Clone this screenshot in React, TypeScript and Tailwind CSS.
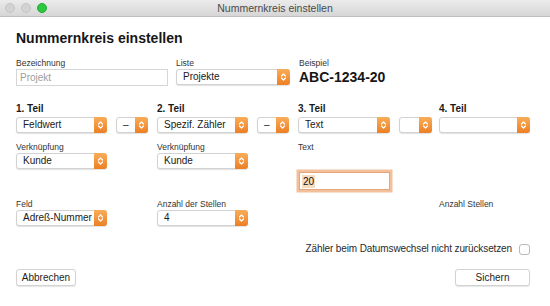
import React from "react";

const Chevron = () => (
	<svg width="7" height="10" viewBox="0 0 7 10" fill="none">
		<path d="M1.5 4 L3.5 2 L5.5 4" stroke="white" strokeWidth="1.2" strokeLinecap="round" strokeLinejoin="round" />
		<path d="M1.5 6 L3.5 8 L5.5 6" stroke="white" strokeWidth="1.2" strokeLinecap="round" strokeLinejoin="round" />
	</svg>
);

const Popup = ({ value, w }: { value?: string; w: string }) => (
	<div
		className={`${w} h-[16px] flex items-stretch bg-white rounded-[3px] border border-[#d2d2d2] shadow-[0_1px_1px_rgba(0,0,0,0.12)]`}
	>
		<span className="flex-1 pl-[6px] text-[10px] leading-[14px] text-[#1a1a1a] whitespace-nowrap overflow-hidden">
			{value}
		</span>
		<span className="w-[13px] -my-px -mr-px rounded-r-[3px] bg-gradient-to-b from-[#f9ad58] to-[#ec7f22] flex items-center justify-center">
			<Chevron />
		</span>
	</div>
);

const Label = ({ children }: { children: React.ReactNode }) => (
	<p className="text-[8.5px] leading-[10px] text-[#333] mb-px whitespace-nowrap">{children}</p>
);

const PartHead = ({ children }: { children: React.ReactNode }) => (
	<p className="text-[10px] leading-[12px] font-bold text-[#1a1a1a] mb-[2px]">{children}</p>
);

const Light = ({ color }: { color: string }) => (
	<span className={`w-[10px] h-[10px] rounded-full ${color}`}></span>
);

export default function App() {
	return (
		<div className="w-[550px] h-[306px] bg-white flex flex-col font-['Liberation_Sans',Arial,sans-serif] overflow-hidden">
			{/* title bar */}
			<div className="h-[17px] shrink-0 relative flex items-center bg-gradient-to-b from-[#ebebeb] to-[#d6d6d6] border-b border-[#bfbfbf]">
				<div className="flex gap-[6px] pl-[5px]">
					<Light color="bg-[#d3d3d3] border border-[#c4c4c4]" />
					<Light color="bg-[#d3d3d3] border border-[#c4c4c4]" />
					<Light color="bg-[#2bc840] border border-[#23a935]" />
				</div>
				<p className="absolute inset-x-0 text-center text-[10.5px] leading-[17px] text-[#4a4a4a]">
					Nummernkreis einstellen
				</p>
			</div>

			<div className="flex-1 flex flex-col pl-[16px] pr-[20px]">
				<h1 className="mt-[13px] text-[14px] leading-[16px] font-bold text-[#161616]">
					Nummernkreis einstellen
				</h1>

				{/* row 1 */}
				<div className="mt-[12px] flex">
					<div className="w-[160px]">
						<Label>Bezeichnung</Label>
						<div className="w-[152px] h-[17px] border border-[#d6d6d6] bg-white pl-[3px] text-[10px] leading-[15px] text-[#9d9d9d]">
							Projekt
						</div>
					</div>
					<div className="w-[123px]">
						<Label>Liste</Label>
						<Popup value="Projekte" w="w-[114px]" />
					</div>
					<div>
						<Label>Beispiel</Label>
						<p className="mt-px text-[14px] leading-[16px] font-bold text-[#161616]">ABC-1234-20</p>
					</div>
				</div>

				{/* row 2 */}
				<div className="mt-[17px] grid grid-cols-[141px_141px_141px_91px]">
					<div>
						<PartHead>1. Teil</PartHead>
						<div className="flex gap-[9px]">
							<Popup value="Feldwert" w="w-[91px]" />
							<Popup value="–" w="w-[32px]" />
						</div>
					</div>
					<div>
						<PartHead>2. Teil</PartHead>
						<div className="flex gap-[9px]">
							<Popup value="Spezif. Zähler" w="w-[91px]" />
							<Popup value="–" w="w-[32px]" />
						</div>
					</div>
					<div>
						<PartHead>3. Teil</PartHead>
						<div className="flex gap-[9px]">
							<Popup value="Text" w="w-[92px]" />
							<Popup w="w-[33px]" />
						</div>
					</div>
					<div>
						<PartHead>4. Teil</PartHead>
						<Popup w="w-[91px]" />
					</div>
				</div>

				{/* row 3 */}
				<div className="mt-[9px] grid grid-cols-[141px_141px_141px_91px]">
					<div>
						<Label>Verknüpfung</Label>
						<Popup value="Kunde" w="w-[91px]" />
					</div>
					<div>
						<Label>Verknüpfung</Label>
						<Popup value="Kunde" w="w-[91px]" />
					</div>
					<div>
						<Label>Text</Label>
						<div className="mt-[20px] ml-px w-[91px] h-[18px] border border-[#e4a77c] bg-white shadow-[0_0_0_2.5px_#f4c09b] flex items-center pl-[2px]">
							<span className="bg-[#f9dbbd] text-[10px] leading-[13px] text-[#111] px-px">20</span>
						</div>
					</div>
				</div>

				{/* row 4 */}
				<div className="mt-[9px] grid grid-cols-[141px_141px_141px_91px]">
					<div>
						<Label>Feld</Label>
						<Popup value="Adreß-Nummer" w="w-[91px]" />
					</div>
					<div>
						<Label>Anzahl der Stellen</Label>
						<Popup value="4" w="w-[91px]" />
					</div>
					<div></div>
					<div>
						<Label>Anzahl Stellen</Label>
					</div>
				</div>

				{/* checkbox row */}
				<div className="mt-[17px] flex items-center justify-end gap-[7px]">
					<span className="text-[10px] tracking-[-0.12px] leading-[12px] text-[#2a2a2a] whitespace-nowrap">
						Zähler beim Datumswechsel nicht zurücksetzen
					</span>
					<span className="w-[11px] h-[11px] rounded-[3px] border border-[#b9b9b9] bg-white"></span>
				</div>

				{/* buttons */}
				<div className="mt-[14px] flex justify-between">
					<button className="w-[60px] h-[17px] rounded-[3px] border border-[#d2d2d2] bg-white shadow-[0_1px_1px_rgba(0,0,0,0.1)] text-[10px] leading-[15px] text-[#1e1e1e]">
						Abbrechen
					</button>
					<button className="w-[75px] h-[17px] rounded-[3px] border border-[#d2d2d2] bg-white shadow-[0_1px_1px_rgba(0,0,0,0.1)] text-[10px] leading-[15px] text-[#1e1e1e]">
						Sichern
					</button>
				</div>
			</div>
		</div>
	);
}
